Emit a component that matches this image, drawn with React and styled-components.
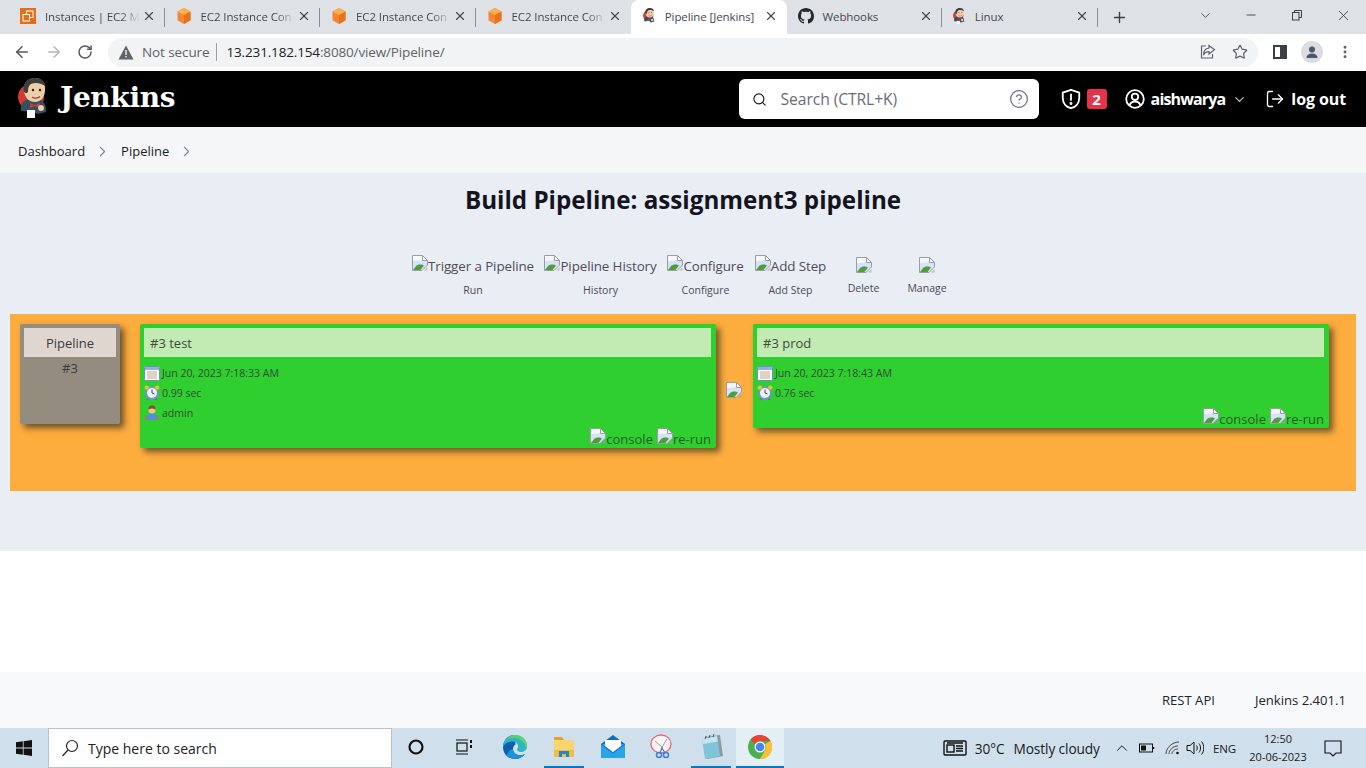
import React from 'react';
import styled, { createGlobalStyle } from 'styled-components';
import { ArrowLeft, ArrowRight, RotateCw, X, Plus, ChevronDown, ChevronUp, ChevronRight, Minus, Star, Search, CircleHelp, LogOut, MoreVertical } from 'lucide-react';

const Global = createGlobalStyle`
  html, body { margin: 0; padding: 0; }
  body { font-family: "Open Sans", "Noto Sans", sans-serif; color: #14141f; background: #fff; }
  * { box-sizing: border-box; }
`;

const Page = styled.div`
  width: 1366px;
  height: 768px;
  display: flex;
  flex-direction: column;
  overflow: hidden;
`;

/* browser chrome */
const TabStrip = styled.div`
  height: 34px;
  background: #dee1e6;
  display: flex;
  align-items: stretch;
  padding-left: 9px;
`;

const Tab = styled.div`
  width: 155.5px;
  display: flex;
  align-items: center;
  padding: 0 9px 2px ${p => (p.$active ? '12px' : '11px')};
  gap: 9px;
  font-size: 11.5px;
  color: #45494f;
  background: ${p => (p.$active ? '#fff' : 'transparent')};
  border-radius: ${p => (p.$active ? '8px 8px 0 0' : '0')};
  position: relative;
  &::after {
    content: '';
    display: ${p => (p.$sep ? 'block' : 'none')};
    position: absolute;
    right: 0;
    top: 8px;
    height: 19px;
    width: 1px;
    background: #8b8f94;
  }
`;

const TabTitle = styled.span`
  flex: 1;
  white-space: nowrap;
  margin-right: -9px;
  letter-spacing: -0.1px;
  ${p => p.$fade && 'mask-image: linear-gradient(to right, #000 78%, transparent 98%);'}
`;

const NewTab = styled.div`
  width: 44px;
  display: flex;
  align-items: center;
  justify-content: center;
  color: #3c4043;
`;

const WindowBtns = styled.div`
  margin-left: auto;
  display: flex;
  align-items: flex-start;
  color: #3c4043;
  padding: 7px 0 0 0;
`;

const WinBtn = styled.div`
  width: 46px;
  height: 16px;
  display: flex;
  align-items: center;
  justify-content: center;
`;

const ToolBar = styled.div`
  height: 34px;
  background: #fff;
  display: flex;
  align-items: center;
  padding: 2px 0 0 13px;
  color: #5f6368;
`;

const NavBtn = styled.div`
  width: 32px;
  display: flex;
  align-items: center;
  color: ${p => (p.$off ? '#b4b6b9' : '#54575b')};
`;

const Omnibox = styled.div`
  width: 1150px;
  height: 29px;
  margin-left: -1px;
  border-radius: 15px;
  background: #f1f3f4;
  display: flex;
  align-items: center;
  padding: 0 10px;
  font-size: 13.5px;
`;

const NotSecure = styled.span`
  color: #5f6368;
  margin-left: 8px;
  padding-right: 7px;
  border-right: 1px solid #9aa0a6;
  line-height: 18px;
  font-size: 13.5px;
  letter-spacing: -0.1px;
`;

const Url = styled.span`
  margin-left: 9px;
  color: #5f6368;
  letter-spacing: -0.15px;
  b { font-weight: 400; color: #202124; }
`;

const OmniIcons = styled.div`
  margin-left: auto;
  display: flex;
  align-items: center;
  gap: 15px;
`;

const ToolIcons = styled.div`
  display: flex;
  align-items: center;
  margin-left: 15px;
  gap: 14px;
`;

const Avatar = styled.div`
  width: 22px;
  height: 22px;
  border-radius: 50%;
  background: #dadce0;
  display: flex;
  align-items: center;
  justify-content: center;
`;

const Spacer = styled.div`
  height: 3px;
  background: #fff;
`;

/* jenkins header */
const Header = styled.header`
  height: 56px;
  background: #000;
  color: #fff;
  display: flex;
  align-items: center;
  padding: 0 20px 0 18px;
`;

const Brand = styled.div`
  display: flex;
  align-items: center;
  gap: 10px;
  font-family: "DejaVu Serif", "Liberation Serif", serif;
  font-weight: 700;
  font-size: 28px;
  letter-spacing: -0.35px;
  margin-top: -3px;
`;

const HeaderRight = styled.div`
  margin-left: auto;
  display: flex;
  align-items: center;
  font-weight: 700;
  font-size: 16px;
`;

const SearchBox = styled.div`
  width: 300px;
  height: 40px;
  background: #fff;
  border-radius: 6px;
  color: #14141f;
  display: flex;
  align-items: center;
  padding: 0 10px 0 13px;
  font-weight: 400;
  font-size: 15.7px;
  margin-right: 21px;
`;

const SearchText = styled.span`
  margin-left: 14px;
  color: #6d6b78;
  flex: 1;
  letter-spacing: -0.1px;
`;

const Badge = styled.span`
  width: 20px;
  height: 20px;
  background: #e6334a;
  border-radius: 3px;
  font-size: 15px;
  line-height: 20px;
  text-align: center;
  margin: 0 18px 0 5px;
`;

const UserName = styled.span`
  margin: 0 7px 0 6px;
  letter-spacing: -0.85px;
`;

const LogOutBtn = styled.span`
  display: flex;
  align-items: center;
  gap: 6px;
  margin-left: 18px;
  letter-spacing: -0.1px;
`;

const Crumbs = styled.nav`
  height: 46px;
  background: #f5f6f8;
  display: flex;
  align-items: center;
  padding: 2px 0 0 18px;
  font-size: 13px;
  font-weight: 500;
  color: #1c1c28;
`;

const CrumbSep = styled.span`
  display: flex;
  color: #85858f;
  margin: 0 10px 0 9px;
`;

/* view */
const Main = styled.main`
  height: 378px;
  background: #e9edf4;
  padding: 0 10px;
`;

const Title = styled.h1`
  margin: 0;
  padding-top: 10px;
  height: 82px;
  font-size: 24.2px;
  line-height: 34px;
  font-weight: 700;
  text-align: center;
  color: #14141f;
`;

const Actions = styled.div`
  display: flex;
  justify-content: center;
  height: 59px;
`;

const Action = styled.div`
  width: ${p => p.$w}px;
  display: flex;
  flex-direction: column;
  align-items: center;
  font-size: 10.5px;
  color: #4b4b55;
`;

const ActionAlt = styled.div`
  display: flex;
  align-items: flex-start;
  height: 26px;
  font-size: 13.4px;
  color: #4d4d57;
  white-space: nowrap;
  line-height: 22px;
  padding-top: ${p => (p.$bare ? '2px' : '0')};
  letter-spacing: -0.1px;
`;

const ActionLabel = styled.div`
  line-height: 14px;
  margin-top: ${p => (p.$up ? '0' : '2px')};
`;

const Board = styled.div`
  height: 177px;
  background: #fdac3e;
  padding: 10px;
  display: flex;
  align-items: flex-start;
`;

const Revision = styled.div`
  width: 100px;
  height: 100px;
  background: #958c80;
  border-radius: 2px;
  padding: 4px;
  box-shadow: 4px 4px 6px rgba(60, 50, 30, 0.75);
  text-align: center;
  font-size: 13px;
  color: #3b3b3b;
  margin-right: 20px;
  flex: none;
`;

const RevisionHead = styled.div`
  height: 29px;
  line-height: 31px;
  background: #dfd7cf;
  font-size: 13px;
`;

const RevisionNum = styled.div`
  line-height: 22px;
`;

const Card = styled.div`
  width: 576px;
  height: ${p => p.$h}px;
  background: #2fcf30;
  border-radius: 2px;
  padding: 4px 5px 4px 4px;
  box-shadow: 4px 4px 6px rgba(60, 50, 30, 0.7);
  display: flex;
  flex-direction: column;
  font-size: 10.6px;
  color: #354a35;
  flex: none;
`;

const CardHead = styled.div`
  height: 29px;
  line-height: 31px;
  background: #c2ebb4;
  padding-left: 6px;
  font-size: 13px;
  color: #3f4a3a;
  margin-bottom: 6px;
`;

const Meta = styled.div`
  height: 20px;
  display: flex;
  align-items: center;
  gap: 2px;
  letter-spacing: -0.05px;
`;

const CardLinks = styled.div`
  margin-top: auto;
  display: flex;
  justify-content: flex-end;
  gap: 4px;
  font-size: 13px;
  line-height: 10px;
  color: #2a5c2a;
`;

const LinkAlt = styled.span`
  display: flex;
  align-items: flex-end;
`;

const Arrow = styled.div`
  width: 37px;
  flex: none;
  padding: 58px 0 0 10px;
  display: flex;
`;

const Footer = styled.footer`
  margin-top: 121px;
  height: 56px;
  background: #f8f9fa;
  display: flex;
  align-items: center;
  justify-content: flex-end;
  gap: 40px;
  padding-right: 20px;
  font-size: 13.1px;
  color: #22222c;
`;

/* windows taskbar */
const TaskBar = styled.div`
  height: 40px;
  background: #cfe0ec;
  display: flex;
  align-items: center;
  color: #111;
`;

const StartBtn = styled.div`
  width: 48px;
  display: flex;
  justify-content: center;
`;

const SearchBar = styled.div`
  width: 344px;
  height: 40px;
  background: #fff;
  border: 1px solid #b7c2cb;
  display: flex;
  align-items: center;
  padding-left: 12px;
  gap: 9px;
  font-size: 14px;
  color: #222;
`;

const TaskIcon = styled.div`
  width: ${p => p.$w || 48}px;
  height: 40px;
  margin-left: ${p => p.$ml || 0}px;
  display: flex;
  align-items: center;
  justify-content: center;
  background: ${p => (p.$on ? '#e4eef5' : 'transparent')};
  border-bottom: 2px solid ${p => (p.$open ? '#0078d4' : 'transparent')};
`;

const Tray = styled.div`
  margin-left: auto;
  display: flex;
  align-items: center;
  font-size: 14px;
  color: #1a1a1a;
  padding-right: 8px;
`;

const TrayText = styled.span`
  margin-left: ${p => p.$ml || 0}px;
  font-size: ${p => p.$fs || 13.7}px;
  letter-spacing: -0.1px;
`;

const TrayGap = styled.span`
  width: ${p => p.$w}px;
`;

const Clock = styled.div`
  width: 60px;
  margin-left: 12px;
  text-align: center;
  font-size: 11px;
  line-height: 18px;
`;

const Notify = styled.div`
  width: 50px;
  display: flex;
  justify-content: center;
`;

/* drawings */
const Broken = ({ size = 16 }) => (
  <svg width={size} height={size} viewBox="0 0 16 16" style={{ flex: 'none' }}>
    <path d="M.5.5h10l5 5v4.500l-5.500 5.500H.5z" fill="#d5e2f7" stroke="#9a9ea3" />
    <path d="M10.500.5v5h5z" fill="#fff" stroke="#9a9ea3" />
    <path d="M1 1h9v3.500c-1 1-2.500 1.500-4 1.200C4 5.500 2.500 6.500 1 6z" fill="#f4f7fc" />
    <path d="M1 15l3.500-4.500c2-1.500 6-1.500 7.500 0L8.500 15z" fill="#4f9e3a" />
    <path d="M12 15.500l3.500-3.500v3.500z" fill="#a0a4a8" opacity="0.6" />
  </svg>
);

const Cube = () => (
  <svg width="16" height="16" viewBox="0 0 16 16" style={{ flex: 'none' }}>
    <path d="M8 0l6.500 3.600v8.600L8 16 1.500 12.200V3.600z" fill="#f58536" />
    <path d="M8 0l6.500 3.600L8 7.300 1.500 3.600z" fill="#fbb04b" />
    <path d="M8 7.300V16l6.500-3.800V3.600z" fill="#e9711c" />
  </svg>
);

const Ec2 = () => (
  <svg width="16" height="16" viewBox="0 0 16 16" style={{ flex: 'none' }}>
    <rect width="16" height="16" fill="#e2701b" />
    <rect x="6.500" y="3" width="6.500" height="6.500" fill="none" stroke="#fff" strokeWidth="1" />
    <rect x="3" y="6.500" width="6.500" height="6.500" fill="#e2701b" stroke="#fff" strokeWidth="1" />
  </svg>
);

const Butler = ({ size = 16 }) => (
  <svg width={size * 0.8} height={size} viewBox="0 0 32 40" style={{ flex: 'none' }}>
    <circle cx="13" cy="19" r="13" fill="#d33833" />
    <path d="M3 33c-1-6 2-11 8-12h9c5 1 8 5 8 10v3l-8 2-5-2z" fill="#33505f" />
    <path d="M6 13C5 5 10 0 17 0s11 5 10 12c0 7-4 12-10 12S7 20 6 13z" fill="#eecda9" />
    <path d="M6 14C4 6 9 0 17 0c6 0 10 3 10 8-4-3-10-4-14-2-2 1-3 4-3 7 0 2-2 3-4 1z" fill="#3e3c3c" />
    <circle cx="15" cy="12" r="1.200" fill="#222" />
    <circle cx="22" cy="12" r="1.200" fill="#222" />
    <path d="M14 19c2 1.500 6 1.500 8-.5" fill="none" stroke="#8c4a3a" strokeWidth="1.200" />
    <path d="M12 25l5 2 5-2v5l-5-2-5 2z" fill="#d33833" />
    <rect x="9" y="32" width="8" height="8" fill="#fff" />
    <circle cx="23" cy="30" r="3" fill="#eecda9" />
  </svg>
);

const Github = () => (
  <svg width="16" height="16" viewBox="0 0 16 16" fill="#24292f" style={{ flex: 'none' }}>
    <path d="M8 0C3.580 0 0 3.580 0 8c0 3.540 2.290 6.530 5.470 7.590.4.070.55-.17.55-.38 0-.19-.01-.82-.01-1.490-2.010.37-2.530-.49-2.690-.94-.09-.23-.48-.94-.82-1.130-.28-.15-.68-.52-.01-.53.63-.01 1.080.58 1.230.82.720 1.210 1.870.87 2.330.66.070-.52.280-.87.510-1.070-1.780-.2-3.640-.89-3.640-3.950 0-.87.310-1.590.82-2.150-.08-.2-.36-1.020.08-2.120 0 0 .67-.21 2.200.82.640-.18 1.320-.27 2-.27s1.360.09 2 .27c1.530-1.040 2.200-.82 2.200-.82.440 1.100.160 1.920.080 2.120.510.560.820 1.270.820 2.150 0 3.070-1.870 3.750-3.650 3.950.290.250.540.730.540 1.480 0 1.070-.010 1.930-.010 2.200 0 .210.150.460.550.380A8.010 8.010 0 0016 8c0-4.420-3.580-8-8-8z" />
  </svg>
);

const Warn = () => (
  <svg width="16" height="15" viewBox="0 0 16 15" style={{ flex: 'none' }}>
    <path d="M8 .5l7.500 14H.5z" fill="#5f6368" />
    <rect x="7.300" y="5" width="1.400" height="5" fill="#f1f3f4" />
    <rect x="7.300" y="11" width="1.400" height="1.500" fill="#f1f3f4" />
  </svg>
);

const Share = () => (
  <svg width="18" height="18" viewBox="0 0 18 18" fill="none" stroke="#5f6368" strokeWidth="1.200">
    <path d="M7 3H2.500v12h11v-4" />
    <path d="M10 2.500l5.500 4.300-5.500 4.200V8.600c-3 0-4.500 1.200-5.500 3.400 0-4 2-6.500 5.500-7z" />
  </svg>
);

const SidePanel = () => (
  <svg width="14" height="14" viewBox="0 0 14 14">
    <rect x="1" y="1" width="12" height="12" fill="none" stroke="#3c4043" strokeWidth="2" />
    <rect x="7" y="1" width="6" height="12" fill="#3c4043" />
  </svg>
);

const Person = () => (
  <svg width="14" height="14" viewBox="0 0 14 14" fill="#4a5568">
    <circle cx="7" cy="4.500" r="3" />
    <path d="M1.500 13c0-3 2.500-4.500 5.500-4.500s5.500 1.500 5.500 4.500z" />
  </svg>
);

const Restore = () => (
  <svg width="12" height="12" viewBox="0 0 12 12" fill="none" stroke="#3c4043">
    <rect x="1.500" y="3.500" width="6.500" height="7.500" />
    <path d="M3.500 3.500V1.500H10.500V8.500H8" />
  </svg>
);

const Shield = () => (
  <svg width="22" height="22" viewBox="0 0 24 24" fill="none" stroke="#fff" strokeWidth="2" strokeLinejoin="round">
    <path d="M12 2l9 3v6c0 6-4 10-9 11-5-1-9-5-9-11V5z" />
    <path d="M12 7v6" strokeLinecap="round" />
    <circle cx="12" cy="17" r="0.600" fill="#fff" />
  </svg>
);

const UserCircle = () => (
  <svg width="20" height="20" viewBox="0 0 20 20" fill="none" stroke="#fff" strokeWidth="1.800">
    <circle cx="10" cy="10" r="8.800" />
    <circle cx="10" cy="7.800" r="3.200" />
    <path d="M4.500 16.500c1-3 3-4 5.500-4s4.500 1 5.500 4" />
  </svg>
);

const Calendar = () => (
  <svg width="16" height="15" viewBox="0 0 16 15" style={{ flex: 'none' }}>
    <rect x=".5" y=".5" width="15" height="14" rx="1" fill="#fff" stroke="#6f8fc4" />
    <rect x="1" y="1" width="14" height="3" fill="#8fb0e0" />
    <path d="M3 6h10M3 8h10M3 10h10M3 12h10" stroke="#b9a88a" strokeWidth="1" />
  </svg>
);

const AlarmClock = () => (
  <svg width="16" height="16" viewBox="0 0 16 16" style={{ flex: 'none' }}>
    <path d="M3 15l2-2M13 15l-2-2" stroke="#5f6f86" strokeWidth="1.500" />
    <circle cx="8" cy="8" r="7" fill="#6f95c4" />
    <circle cx="8" cy="8" r="5" fill="#eef2f8" />
    <circle cx="2.800" cy="2.600" r="2.200" fill="#e6c23d" />
    <circle cx="13.200" cy="2.600" r="2.200" fill="#e6c23d" />
    <path d="M8 4.500V8l2.500 1" fill="none" stroke="#444" />
  </svg>
);

const Admin = () => (
  <svg width="16" height="16" viewBox="0 0 16 16" style={{ flex: 'none' }}>
    <path d="M1 15c0-4 3-6.500 7-6.500s7 2.500 7 6.500z" fill="#4f90d8" />
    <path d="M1 15c0-2 .5-3 1.500-4l1 4zM15 15c0-2-.5-3-1.500-4l-1 4z" fill="#d96a3a" />
    <circle cx="8" cy="5" r="3.500" fill="#f2c39a" />
    <path d="M4.500 5C4 1.500 6 .5 8 .5s4 1 3.500 4.500C10 3 6 3 4.500 5z" fill="#8a4a22" />
  </svg>
);

const WinLogo = () => (
  <svg width="16" height="16" viewBox="0 0 16 16" fill="#111">
    <path d="M0 2.300l6.800-1v6.300H0zM7.600 1.200L16 0v7.600H7.600zM0 8.400h6.800v6.300l-6.800-1zM7.600 8.400H16V16l-8.400-1.200z" />
  </svg>
);

const Magnifier = () => (
  <svg width="18" height="18" viewBox="0 0 18 18" fill="none" stroke="#222" strokeWidth="1.200">
    <circle cx="11" cy="7" r="5.500" />
    <path d="M7 11l-5.500 6" />
  </svg>
);

const Cortana = () => (
  <svg width="16" height="16" viewBox="0 0 16 16">
    <circle cx="8" cy="8" r="6.500" fill="none" stroke="#111" strokeWidth="2.200" />
  </svg>
);

const TaskView = () => (
  <svg width="18" height="18" viewBox="0 0 18 18" fill="none" stroke="#111" strokeWidth="1.200">
    <rect x="2" y="5" width="10" height="8" />
    <path d="M1 2h12M1 16h12" />
    <path d="M16 2v3M16 7v3" strokeWidth="2" />
  </svg>
);

const Edge = () => (
  <svg width="24" height="24" viewBox="0 0 24 24">
    <path d="M12 0C5 0 0 5.500 0 12c0 7 5.500 12 12 12 4 0 7.500-1.800 10-5-6 3-12 0-12-5 0-2 1-3.500 2.500-4.500L12 5z" fill="#0c5fb0" />
    <path d="M0 12C0 5.500 5 0 12 0c7 0 12 5 12 11 0 4-3 6-6 6-2.500 0-4-1-4-2.500 0-.7.5-1 1-2 .5-3-2-6-6-6-4.500 0-8 2.500-9 5.500z" fill="#2db5c4" />
    <path d="M12 0c7 0 12 5 12 11 0 1.500-.4 2.800-1 3.800 0-6-4.500-11-11-12-3-.4-6 .5-8 2C6 2 9 0 12 0z" fill="#5fd36c" />
    <path d="M10 14c0 5 6 8 12 5-2.500 3.200-6 5-10 5-3 0-6-1-8-3 0-3 2-6 6-7z" fill="#1a93d9" />
  </svg>
);

const Folder = () => (
  <svg width="24" height="24" viewBox="0 0 24 24">
    <path d="M2 2h8l2 3H2z" fill="#e0a526" />
    <rect x="2" y="5" width="20" height="17" fill="#fbd46c" />
    <rect x="2" y="15" width="20" height="7" fill="#f4bc3a" />
    <path d="M7 22v-6h10v6h-3v-3h-4v3z" fill="#1b88d6" />
  </svg>
);

const Mail = () => (
  <svg width="24" height="24" viewBox="0 0 24 24">
    <path d="M12 0l12 9v14H0V9z" fill="#0f6fbf" />
    <rect x="0" y="9" width="24" height="14" fill="#2aa3e8" />
    <path d="M4 5h16v6l-8 6-8-6z" fill="#fff" />
    <path d="M0 9l12 9 12-9" fill="none" stroke="#0f6fbf" />
  </svg>
);

const Snip = () => (
  <svg width="24" height="26" viewBox="0 0 24 26" fill="none">
    <ellipse cx="12" cy="10" rx="10" ry="9" fill="#fdf3f4" stroke="#dc6c7a" strokeWidth="1.300" />
    <path d="M6 7l8 7M18 5l-6 10" stroke="#9d9da6" strokeWidth="1" />
    <circle cx="10" cy="21" r="2.500" stroke="#3d7fd1" strokeWidth="1.500" />
    <circle cx="17" cy="21" r="2.500" stroke="#3d7fd1" strokeWidth="1.500" />
    <path d="M11 19l2-5 3 5" stroke="#3d7fd1" strokeWidth="1.200" />
  </svg>
);

const Notepad = () => (
  <svg width="24" height="26" viewBox="0 0 24 26">
    <path d="M6 3l15-2 3 21-16 3z" fill="#8b9aa0" />
    <path d="M3 5l15-3 3 20-15 3z" fill="#7fc4d8" />
    <path d="M3 5l15-3 .8 5.500L4 10z" fill="#c4e6ef" />
    <path d="M6 5l1-3M10 4l1-3M14 3l1-3" stroke="#555" strokeWidth="1" />
  </svg>
);

const Chrome = () => (
  <svg width="24" height="24" viewBox="0 0 24 24">
    <circle cx="12" cy="12" r="12" fill="#4caf50" />
    <path d="M12 0a12 12 0 0110.400 6H12a6 6 0 00-5.200 3L2.600 4.500A12 12 0 0112 0z" fill="#ea4335" />
    <path d="M22.400 6A12 12 0 0112 24l5.200-9a6 6 0 000-6z" fill="#fbc02d" />
    <circle cx="12" cy="12" r="5.500" fill="#fff" />
    <circle cx="12" cy="12" r="4.300" fill="#4285f4" />
  </svg>
);

const News = () => (
  <svg width="24" height="16" viewBox="0 0 24 16" fill="none" stroke="#111" strokeWidth="1.400">
    <rect x="1" y="1" width="22" height="14" rx="1" />
    <rect x="4" y="5" width="7" height="7" />
    <path d="M4 3h16M13 6h7M13 8.500h7M13 11h7" />
  </svg>
);

const Battery = () => (
  <svg width="16" height="10" viewBox="0 0 16 10" fill="none" stroke="#111">
    <rect x=".5" y="1" width="13" height="8" />
    <rect x="2" y="2.500" width="5" height="5" fill="#111" stroke="none" />
    <path d="M14.500 4v2" strokeWidth="1.500" />
  </svg>
);

const Wifi = () => (
  <svg width="16" height="14" viewBox="0 0 16 14" fill="none" stroke="#333" strokeWidth="0.900">
    <path d="M1 13C1 7 7 1 14 1M4 13c0-4 4-8 9-8M7 13c0-2 2-5 6-5" />
    <circle cx="12.500" cy="12" r="1.300" fill="#111" stroke="none" />
  </svg>
);

const Speaker = () => (
  <svg width="18" height="16" viewBox="0 0 18 16" fill="none" stroke="#111">
    <path d="M1 5.500h3L8 2v12l-4-3.500H1z" />
    <path d="M10.500 5.500c1 1.500 1 3.500 0 5M13 3.500c2 2.500 2 6.500 0 9M15.500 1.500c3 3.500 3 9.500 0 13" />
  </svg>
);

const Bubble = () => (
  <svg width="18" height="17" viewBox="0 0 18 17" fill="none" stroke="#111" strokeWidth="1.100">
    <path d="M1 1h16v12h-5l-3 3-3-3H1z" />
  </svg>
);

const tabs = [
  { icon: <Ec2 />, title: 'Instances | EC2 M', sep: true, fade: true },
  { icon: <Cube />, title: 'EC2 Instance Con', sep: true, fade: true },
  { icon: <Cube />, title: 'EC2 Instance Con', sep: true, fade: true },
  { icon: <Cube />, title: 'EC2 Instance Con', fade: true },
  { icon: <Butler />, title: 'Pipeline [Jenkins]', active: true },
  { icon: <Github />, title: 'Webhooks', sep: true },
  { icon: <Butler />, title: 'Linux', sep: true },
];

const actions = [
  { alt: 'Trigger a Pipeline', label: 'Run', w: 132 },
  { alt: 'Pipeline History', label: 'History', w: 123 },
  { alt: 'Configure', label: 'Configure', w: 87 },
  { alt: 'Add Step', label: 'Add Step', w: 83 },
  { label: 'Delete', w: 63 },
  { label: 'Manage', w: 64 },
];

const BuildCard = ({ name, date, time, user, h }) => (
  <Card $h={h}>
    <CardHead>{name}</CardHead>
    <Meta><Calendar />{date}</Meta>
    <Meta><AlarmClock />{time}</Meta>
    {user && <Meta><Admin />{user}</Meta>}
    <CardLinks>
      <LinkAlt><Broken />console</LinkAlt>
      <LinkAlt><Broken />re-run</LinkAlt>
    </CardLinks>
  </Card>
);

export default function App() {
  return (
    <Page>
      <Global />
      <TabStrip>
        {tabs.map((t, i) => (
          <Tab key={i} $active={t.active} $sep={t.sep}>
            {t.icon}
            <TabTitle $fade={t.fade}>{t.title}</TabTitle>
            <X size={14} strokeWidth={2} color="#45494f" />
          </Tab>
        ))}
        <NewTab><Plus size={17} strokeWidth={2} /></NewTab>
        <WindowBtns>
          <WinBtn><ChevronDown size={15} strokeWidth={1.3} /></WinBtn>
          <WinBtn><Minus size={14} strokeWidth={1.5} /></WinBtn>
          <WinBtn><Restore /></WinBtn>
          <WinBtn><X size={17} strokeWidth={1.2} /></WinBtn>
        </WindowBtns>
      </TabStrip>
      <ToolBar>
        <NavBtn><ArrowLeft size={18} strokeWidth={2} /></NavBtn>
        <NavBtn $off><ArrowRight size={18} strokeWidth={2} /></NavBtn>
        <NavBtn><RotateCw size={16} strokeWidth={2.2} /></NavBtn>
        <Omnibox>
          <Warn />
          <NotSecure>Not secure</NotSecure>
          <Url><b>13.231.182.154</b>:8080/view/Pipeline/</Url>
          <OmniIcons>
            <Share />
            <Star size={16} strokeWidth={1.8} color="#5f6368" />
          </OmniIcons>
        </Omnibox>
        <ToolIcons>
          <SidePanel />
          <Avatar><Person /></Avatar>
          <MoreVertical size={16} strokeWidth={2.4} color="#5f6368" />
        </ToolIcons>
      </ToolBar>
      <Spacer />
      <Header>
        <Brand><Butler size={40} />Jenkins</Brand>
        <HeaderRight>
          <SearchBox>
            <Search size={15} strokeWidth={1.8} />
            <SearchText>Search (CTRL+K)</SearchText>
            <CircleHelp size={20} strokeWidth={1.5} color="#6d6b90" />
          </SearchBox>
          <Shield />
          <Badge>2</Badge>
          <UserCircle />
          <UserName>aishwarya</UserName>
          <ChevronDown size={15} strokeWidth={1.8} color="#ccc" />
          <LogOutBtn><LogOut size={20} strokeWidth={1.6} />log out</LogOutBtn>
        </HeaderRight>
      </Header>
      <Crumbs>
        Dashboard
        <CrumbSep><ChevronRight size={17} strokeWidth={1.5} /></CrumbSep>
        Pipeline
        <CrumbSep><ChevronRight size={17} strokeWidth={1.5} /></CrumbSep>
      </Crumbs>
      <Main>
        <Title>Build Pipeline: assignment3 pipeline</Title>
        <Actions>
          {actions.map(a => (
            <Action key={a.label} $w={a.w}>
              <ActionAlt $bare={!a.alt}><Broken />{a.alt}</ActionAlt>
              <ActionLabel $up={!a.alt}>{a.label}</ActionLabel>
            </Action>
          ))}
        </Actions>
        <Board>
          <Revision>
            <RevisionHead>Pipeline</RevisionHead>
            <RevisionNum>#3</RevisionNum>
          </Revision>
          <BuildCard name="#3 test" date="Jun 20, 2023 7:18:33 AM" time="0.99 sec" user="admin" h={124} />
          <Arrow><Broken /></Arrow>
          <BuildCard name="#3 prod" date="Jun 20, 2023 7:18:43 AM" time="0.76 sec" h={104} />
        </Board>
      </Main>
      <Footer>
        <span>REST API</span>
        <span>Jenkins 2.401.1</span>
      </Footer>
      <TaskBar>
        <StartBtn><WinLogo /></StartBtn>
        <SearchBar><Magnifier />Type here to search</SearchBar>
        <TaskIcon $w={48}><Cortana /></TaskIcon>
        <TaskIcon $w={47}><TaskView /></TaskIcon>
        <TaskIcon $w={56}><Edge /></TaskIcon>
        <TaskIcon $w={40} $ml={1} $open><Folder /></TaskIcon>
        <TaskIcon $w={58}><Mail /></TaskIcon>
        <TaskIcon $w={38}><Snip /></TaskIcon>
        <TaskIcon $w={40} $ml={11} $open><Notepad /></TaskIcon>
        <TaskIcon $ml={5} $on $open><Chrome /></TaskIcon>
        <Tray>
          <News />
          <TrayText $ml={8}>30°C</TrayText>
          <TrayText $ml={9}>Mostly cloudy</TrayText>
          <TrayGap $w={13} />
          <ChevronUp size={18} strokeWidth={1.3} />
          <TrayGap $w={8} />
          <Battery />
          <TrayGap $w={10} />
          <Wifi />
          <TrayGap $w={5} />
          <Speaker />
          <TrayText $ml={9} $fs={11.5}>ENG</TrayText>
          <Clock>12:50<br />20-06-2023</Clock>
          <Notify><Bubble /></Notify>
        </Tray>
      </TaskBar>
    </Page>
  );
}
